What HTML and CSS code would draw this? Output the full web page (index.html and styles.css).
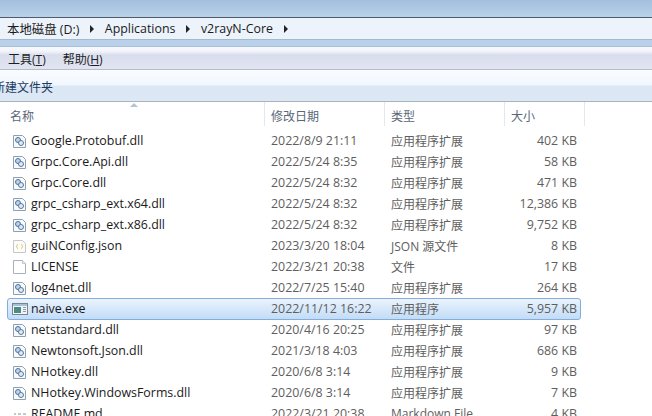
FILE: index.html
```html
<!DOCTYPE html>
<html lang="zh">
<head>
<meta charset="UTF-8" />
<title>v2rayN-Core</title>
<link rel="stylesheet" href="styles.css">
</head>
<body>

<svg class="defs" width="0" height="0" aria-hidden="true">
  <symbol id="ico-dll" viewBox="0 0 16 16">
    <path d="M1.500 3.500h9l3 3v9h-12z" fill="#f7fafd" stroke="#8fa0b3"/>
    <circle cx="6" cy="8" r="2.500" fill="#bcd3ea" stroke="#4f7198"/>
    <circle cx="9" cy="11" r="2.500" fill="#dfe9f4" stroke="#5b7897"/>
  </symbol>
  <symbol id="ico-json" viewBox="0 0 16 16">
    <path d="M1.500 3.500h9l3 3v9h-12z" fill="#fdfdf6" stroke="#c3c8cd"/>
    <path d="M6 7.500q-1 0-1 1v.5l-.700.500.700.500v.500q0 1 1 1M9 7.500q1 0 1 1v.5l.700.500-.700.500v.500q0 1-1 1" fill="none" stroke="#cfc67c"/>
  </symbol>
  <symbol id="ico-file" viewBox="0 0 16 16">
    <path d="M1.500 2.500h9l3 3v10h-12z" fill="#fff" stroke="#a9b1ba"/>
    <path d="M10.500 2.500v3h3" fill="#eef1f4" stroke="#c3c9d0"/>
  </symbol>
  <symbol id="ico-exe" viewBox="0 0 16 16">
    <rect x=".5" y="3.500" width="15" height="11" fill="#f2f5f8" stroke="#76858f"/>
    <rect x="1" y="4" width="14" height="2" fill="#a9c0d4"/>
    <rect x="2" y="7" width="7" height="6" fill="#4d8a86"/>
    <path d="M11 7.500h3M11 9.500h3M11 11.500h3" stroke="#8d99a3"/>
  </symbol>
  <symbol id="ico-md" viewBox="0 0 16 16">
    <path d="M2 9h2M6 9h3M11 9h3M3 12h10" stroke="#8a8f96" fill="none"/>
  </symbol>
</svg>

<div class="title-strip"></div>

<nav class="address-bar">
  <span>本地磁盘 (D:)</span><i class="arrow"></i>
  <span>Applications</span><i class="arrow"></i>
  <span>v2rayN-Core</span><i class="arrow"></i>
</nav>

<div class="gap-strip"></div>

<div class="menu-bar">
  <span>工具(<u>T</u>)</span>
  <span>帮助(<u>H</u>)</span>
</div>

<div class="tool-bar"><span>新建文件夹</span></div>

<div class="list-head">
  <span class="sort-mark"></span>
  <div class="col col-name">名称</div>
  <div class="col col-date">修改日期</div>
  <div class="col col-type">类型</div>
  <div class="col col-size">大小</div>
  <div class="col col-rest"></div>
</div>

<div class="rows">
  <div class="row"><svg class="ico"><use href="#ico-dll"/></svg><span class="col-name">Google.Protobuf.dll</span><span class="col-date">2022/8/9 21:11</span><span class="col-type">应用程序扩展</span><span class="col-size">402 KB</span></div>
  <div class="row"><svg class="ico"><use href="#ico-dll"/></svg><span class="col-name">Grpc.Core.Api.dll</span><span class="col-date">2022/5/24 8:35</span><span class="col-type">应用程序扩展</span><span class="col-size">58 KB</span></div>
  <div class="row"><svg class="ico"><use href="#ico-dll"/></svg><span class="col-name">Grpc.Core.dll</span><span class="col-date">2022/5/24 8:32</span><span class="col-type">应用程序扩展</span><span class="col-size">471 KB</span></div>
  <div class="row"><svg class="ico"><use href="#ico-dll"/></svg><span class="col-name">grpc_csharp_ext.x64.dll</span><span class="col-date">2022/5/24 8:32</span><span class="col-type">应用程序扩展</span><span class="col-size">12,386 KB</span></div>
  <div class="row"><svg class="ico"><use href="#ico-dll"/></svg><span class="col-name">grpc_csharp_ext.x86.dll</span><span class="col-date">2022/5/24 8:32</span><span class="col-type">应用程序扩展</span><span class="col-size">9,752 KB</span></div>
  <div class="row"><svg class="ico"><use href="#ico-json"/></svg><span class="col-name">guiNConfig.json</span><span class="col-date">2023/3/20 18:04</span><span class="col-type">JSON 源文件</span><span class="col-size">8 KB</span></div>
  <div class="row"><svg class="ico"><use href="#ico-file"/></svg><span class="col-name">LICENSE</span><span class="col-date">2022/3/21 20:38</span><span class="col-type">文件</span><span class="col-size">17 KB</span></div>
  <div class="row"><svg class="ico"><use href="#ico-dll"/></svg><span class="col-name">log4net.dll</span><span class="col-date">2022/7/25 15:40</span><span class="col-type">应用程序扩展</span><span class="col-size">264 KB</span></div>
  <div class="row selected"><svg class="ico"><use href="#ico-exe"/></svg><span class="col-name">naive.exe</span><span class="col-date">2022/11/12 16:22</span><span class="col-type">应用程序</span><span class="col-size">5,957 KB</span></div>
  <div class="row"><svg class="ico"><use href="#ico-dll"/></svg><span class="col-name">netstandard.dll</span><span class="col-date">2020/4/16 20:25</span><span class="col-type">应用程序扩展</span><span class="col-size">97 KB</span></div>
  <div class="row"><svg class="ico"><use href="#ico-dll"/></svg><span class="col-name">Newtonsoft.Json.dll</span><span class="col-date">2021/3/18 4:03</span><span class="col-type">应用程序扩展</span><span class="col-size">686 KB</span></div>
  <div class="row"><svg class="ico"><use href="#ico-dll"/></svg><span class="col-name">NHotkey.dll</span><span class="col-date">2020/6/8 3:14</span><span class="col-type">应用程序扩展</span><span class="col-size">9 KB</span></div>
  <div class="row"><svg class="ico"><use href="#ico-dll"/></svg><span class="col-name">NHotkey.WindowsForms.dll</span><span class="col-date">2020/6/8 3:14</span><span class="col-type">应用程序扩展</span><span class="col-size">7 KB</span></div>
  <div class="row"><svg class="ico"><use href="#ico-md"/></svg><span class="col-name">README.md</span><span class="col-date">2022/3/21 20:38</span><span class="col-type">Markdown File</span><span class="col-size">4 KB</span></div>
</div>

</body>
</html>
```

FILE: styles.css
```css
html, body {
  margin: 0;
  height: 416px;
  overflow: hidden;
}
body {
  background: #fff;
  color: #1e1e1e;
  font-family: "Open Sans", "Noto Sans CJK SC", sans-serif;
  font-size: 12px;
}
.defs {
  position: absolute;
}
.title-strip {
  height: 17px;
  background: linear-gradient(#a2bfde, #bad1e9);
  border-bottom: 1px solid #4e5c6c;
}
.address-bar {
  height: 21px;
  display: flex;
  align-items: center;
  padding-left: 7px;
  background: #ecf3fb;
  border-bottom: 1px solid #a9b8c8;
  color: #1a1a1a;
  font-size: 12.4px;
}
.arrow {
  width: 0;
  height: 0;
  margin: 0 10.5px 0 11px;
  border-left: 4px solid #222;
  border-top: 4px solid transparent;
  border-bottom: 4px solid transparent;
}
.gap-strip {
  height: 6px;
  background: #b9d1ea;
  border-bottom: 1px solid #a9bfd6;
}
.menu-bar {
  box-sizing: border-box;
  height: 22px;
  display: flex;
  align-items: center;
  gap: 17px;
  padding: 2px 0 0 8px;
  background: linear-gradient(#f8f9fd 0, #f3f5fb 4px, #d9deed 8px, #e1e4f1 100%);
  box-shadow: 0 1px 0 #b3bdcd;
  margin-bottom: 1px;
}
.tool-bar {
  box-sizing: border-box;
  height: 31px;
  display: flex;
  align-items: center;
  padding-top: 2px;
  background: linear-gradient(#fafcff 0, #f0f7fe 15px, #dbe7f4 16px, #dde8f5 100%);
  box-shadow: 0 1px 0 #a8b3bf;
  margin-bottom: 1px;
  color: #1e3a5c;
  overflow: hidden;
}
.tool-bar span {
  margin-left: -7px;
  white-space: nowrap;
}
.list-head {
  position: relative;
  height: 28px;
  display: flex;
  color: #5a6779;
}
.list-head .col {
  box-sizing: border-box;
  height: 24px;
  line-height: 29px;
  padding-left: 6px;
  border-right: 1px solid #e3e8f0;
  flex: none;
}
.list-head .col-name { width: 265px; padding-left: 10px; }
.list-head .col-date { width: 120px; }
.list-head .col-type { width: 120px; }
.list-head .col-size { width: 80px; }
.list-head .col-rest { border-right: 0; }
.sort-mark {
  position: absolute;
  left: 130px;
  top: 1px;
  width: 0;
  height: 0;
  border-left: 4px solid transparent;
  border-right: 4px solid transparent;
  border-bottom: 4px solid #b3c4d6;
}
.rows {
  display: flex;
  flex-direction: column;
}
.row {
  box-sizing: border-box;
  width: 574px;
  height: 21px;
  flex: none;
  margin-left: 7px;
  display: flex;
  align-items: center;
  border: 1px solid transparent;
  border-radius: 3px;
  white-space: nowrap;
  font-size: 12.4px;
}
.row .ico {
  width: 16px;
  height: 16px;
  margin: 1px 3px 0 4px;
  align-self: flex-start;
  flex: none;
}
.row .col-name { width: 240px; flex: none; color: #1a1a1a; }
.row .col-date { width: 120px; flex: none; color: #5e5e5e; }
.row .col-type { width: 96px; flex: none; color: #5e5e5e; font-size: 12px; }
.row .col-size { width: 90px; flex: none; text-align: right; color: #5e5e5e; }
.row.selected {
  height: 22px;
  padding-bottom: 1px;
  margin-bottom: -1px;
  border-color: #84acdd;
  background: linear-gradient(#eaf3fd, #c2dcf7);
}
```
